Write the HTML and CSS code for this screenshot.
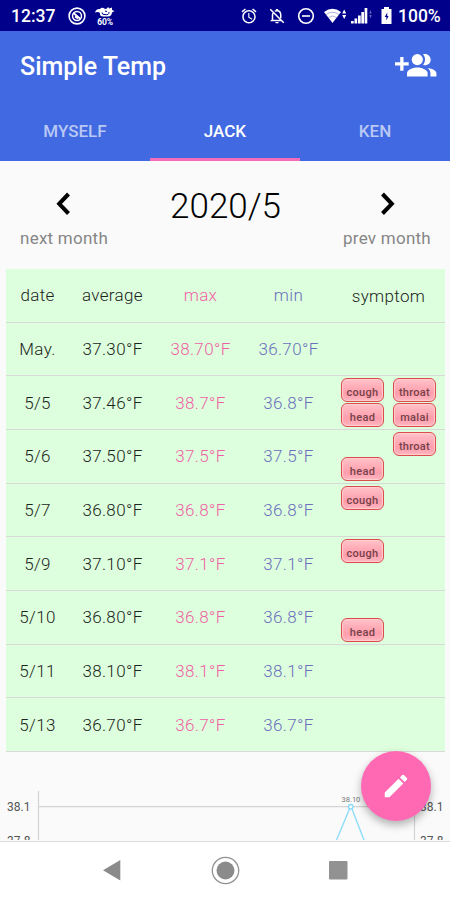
FILE: index.html
```html
<!DOCTYPE html>
<html lang="en">
<head>
<meta charset="utf-8">
<title>Simple Temp</title>
<link rel="stylesheet" href="styles.css">
</head>
<body>
<div class="screen">
  <header class="status">
    <span class="clock">12:37</span>
    <svg class="s-nosound" width="18" height="18" viewBox="0 0 18 18" fill="none" stroke="#fff"><circle cx="9" cy="9" r="7.9" stroke-width="1.6"/><circle cx="9" cy="9" r="4.5" stroke-width="1.5"/><path d="M5.500 6l7 6M7 9.500l3 2" stroke-width="1.700"/></svg>
    <div class="weather">
      <svg width="20" height="11" viewBox="0 0 20 11"><path d="M0 5.500Q1 1.500 5 2Q7-.5 10 2L12 1.500L13 0L14.500 1.500L17 .5V3L19.500 4L17 5.500Q16.500 9.500 13 9.500H8Q4.500 9.500 5 6Q3 4.500 0 5.500Z" fill="#fff"/><path d="M7 5.500Q7 8 10 7.500Q14 8.500 14 5M10 4L12 4.500" fill="none" stroke="#00008b"/></svg>
      <span>60%</span>
    </div>
    <div class="grow"></div>
    <svg class="s-alarm" width="18" height="18" viewBox="0 0 24 24" fill="#fff"><path d="M22 5.720l-4.600-3.860-1.290 1.530 4.600 3.860L22 5.720zM7.880 3.390L6.600 1.860 2 5.710l1.290 1.530 4.590-3.850zM12.500 8H11v6l4.750 2.850.75-1.230-4-2.370V8zM12 4c-4.970 0-9 4.030-9 9s4.020 9 9 9a9 9 0 0 0 0-18zm0 16c-3.870 0-7-3.130-7-7s3.130-7 7-7 7 3.130 7 7-3.130 7-7 7z"/></svg>
    <svg class="s-bell" width="18" height="18" viewBox="0 0 24 24" fill="none" stroke="#fff" stroke-width="2"><path d="M7 7.500Q6 9 6 11v6l-1 1h13M9 5.500Q10 5 12 5Q17 5 17 11v4M3 3l18 18"/><path d="M10.500 2.500h3v2h-3zM10 20h4v1.500h-4z" fill="#fff" stroke="none"/></svg>
    <svg class="s-dnd" width="18" height="18" viewBox="0 0 18 18" fill="none" stroke="#fff" stroke-width="1.6"><circle cx="9" cy="9" r="7.300"/><path d="M5 9h8"/></svg>
    <svg class="s-wifi" width="23" height="16" viewBox="0 0 23 16" fill="#fff"><path d="M0 4Q8.500-2.500 17 4L8.500 15Z"/><path d="M2 6.500Q8.500 2 15 6.500M4.500 9.500Q8.500 6.500 12.500 9.500" fill="none" stroke="#00008b" stroke-width=".6" opacity=".5"/><path d="M18.200 5.500l2-4 2 4zM18.200 7l2 4 2-4z"/></svg>
    <svg class="s-signal" width="22" height="16" viewBox="0 0 22 16" fill="#fff"><path d="M0 13h2.700v2.500H0zM3.500 10.500h2.700v5H3.500zM7 7.500h2.700v8H7zM10.300 4H13v11.500h-2.700zM13.600 0h2.700v15.500h-2.700z"/><path d="M18.300 5.500l1.200-3.500 1.200 3.500zM18.300 7l1.200 3.500L20.700 7z" opacity=".4"/></svg>
    <svg class="s-battery" width="11" height="17" viewBox="0 0 11 17"><path d="M3 0h5v2h2.500v15H.5V2H3z" fill="#fff"/><path d="M6.300 5.500L3.700 10h1.700v3.500L7.500 9H6.200z" fill="#00008b"/></svg>
    <span class="percent">100%</span>
  </header>

  <div class="appbar">
    <h1>Simple Temp</h1>
    <svg width="42" height="26" viewBox="0 0 42 26" fill="#fff"><path d="M0 9.300h5.200V4.100h3.300v5.200h5.200v3.300H8.500v5.200H5.200v-5.200H0z"/><circle cx="22.300" cy="6.600" r="5.600"/><path d="M12 23.500v-3.400c0-3.700 6.800-5.600 10.300-5.600s10.300 1.900 10.300 5.600v3.400z"/><path d="M28 1.300c4.100-1.200 7.700 1.600 7.700 5.400s-3.700 6.500-7.700 5.200c2.700-3.100 2.700-7.600 0-10.600zM32.500 14.900c4.300.6 8.900 2.200 8.900 5.200v3.400h-6v-3.400c0-2.200-1.100-3.900-2.900-5.200z"/></svg>
  </div>
  <nav class="tabs"><span>MYSELF</span><span class="active">JACK</span><span>KEN</span></nav>

  <main class="content">
    <section class="months">
      <div class="side"><svg width="16" height="24" viewBox="0 0 16 24"><path d="M12.500 2L3.200 11.800L12.500 21.500"/></svg><span>next month</span></div>
      <div class="month">2020/5</div>
      <div class="side"><svg width="16" height="24" viewBox="0 0 16 24"><path d="M3.500 2L12.800 11.800L3.500 21.500"/></svg><span>prev month</span></div>
    </section>

    <section class="table">
      <div class="row"><span>date</span><span>average</span><span class="max">max</span><span class="min">min</span><span class="sym">symptom</span></div>
      <div class="row"><span>May.</span><span>37.30°F</span><span class="max">38.70°F</span><span class="min">36.70°F</span></div>
      <div class="row"><span>5/5</span><span>37.46°F</span><span class="max">38.7°F</span><span class="min">36.8°F</span><div class="tags"><b>cough</b><b>throat</b><b>head</b><b>malai</b></div></div>
      <div class="row"><span>5/6</span><span>37.50°F</span><span class="max">37.5°F</span><span class="min">37.5°F</span><div class="tags"><b class="right">throat</b><b>head</b></div></div>
      <div class="row"><span>5/7</span><span>36.80°F</span><span class="max">36.8°F</span><span class="min">36.8°F</span><div class="tags"><b>cough</b></div></div>
      <div class="row"><span>5/9</span><span>37.10°F</span><span class="max">37.1°F</span><span class="min">37.1°F</span><div class="tags"><b>cough</b></div></div>
      <div class="row"><span>5/10</span><span>36.80°F</span><span class="max">36.8°F</span><span class="min">36.8°F</span><div class="tags"><b class="low">head</b></div></div>
      <div class="row"><span>5/11</span><span>38.10°F</span><span class="max">38.1°F</span><span class="min">38.1°F</span></div>
      <div class="row"><span>5/13</span><span>36.70°F</span><span class="max">36.7°F</span><span class="min">36.7°F</span></div>
    </section>

    <svg class="chart" width="450" height="49" viewBox="0 0 450 49">
      <path d="M38.500 0v49M414.500 0v49M38 15.700h376" stroke="#d4d4d4" stroke-width="1.200" fill="none"/>
      <path d="M336.500 49L349.500 18M352 18L364 49" stroke="#8fdcf8" stroke-width="1.400" fill="none"/>
      <circle cx="350.800" cy="15.700" r="2.300" stroke="#8fdcf8" stroke-width="1.500" fill="#fafafa"/>
      <g class="axis"><text x="7" y="19.700">38.1</text><text x="7" y="53.500">37.8</text><text x="420" y="19.700">38.1</text><text x="420" y="53.500">37.8</text></g>
      <text class="point" x="341.500" y="10.800">38.10</text>
    </svg>
    <button class="fab" aria-label="Edit"><svg width="30" height="30" viewBox="0 0 24 24" fill="#fff"><path d="M3 17.250V21h3.750L17.810 9.940l-3.750-3.750L3 17.250zM20.710 7.040a1 1 0 0 0 0-1.410l-2.340-2.340a1 1 0 0 0-1.410 0l-1.830 1.830 3.750 3.750 1.830-1.830z"/></svg></button>
  </main>

  <footer class="navbar">
    <svg width="18" height="21" viewBox="0 0 18 21"><path d="M0 10.300L17.300 0v20.500z" fill="#8b8b8b"/></svg>
    <svg width="29" height="29" viewBox="0 0 29 29"><circle cx="14.500" cy="14.500" r="13.200" fill="none" stroke="#929292" stroke-width="1.300"/><circle cx="14.500" cy="14.500" r="9" fill="#8b8b8b"/></svg>
    <svg width="19" height="19" viewBox="0 0 19 19"><rect width="18.500" height="18.500" rx="1" fill="#929292"/></svg>
  </footer>
</div>
</body>
</html>
```
FILE: styles.css
```css
* { box-sizing: border-box; }
body { margin: 0; font-family: Roboto, "Liberation Sans", sans-serif; background: #fafafa; }
svg { display: block; flex: none; }
.screen { width: 450px; height: 900px; display: flex; flex-direction: column; overflow: hidden; }

.status { height: 31px; flex: none; display: flex; align-items: center; background: #00008b; color: #fff; padding: 0 8px 0 11px; font-weight: 500; }
.clock { width: 57px; font-size: 17.500px; line-height: 31px; padding-top: 1px; }
.weather { margin-left: 9px; width: 20px; display: flex; flex-direction: column; align-items: center; padding-top: 1px; }
.weather span { font-size: 8.500px; line-height: 8px; font-weight: 700; letter-spacing: -.2px; }
.grow { flex: 1; }
.s-alarm { margin-right: 10px; }
.s-bell { margin-right: 11px; }
.s-dnd { margin-right: 9px; }
.s-wifi { margin-right: 4px; }
.s-signal { margin-right: 8px; }
.s-battery { margin-right: 6px; }
.percent { font-size: 17.500px; width: 44px; padding-top: 1px; white-space: nowrap; }

.appbar { height: 71px; flex: none; display: flex; justify-content: space-between; align-items: center; background: #4169e1; padding: 0 13px 2px 20px; }
h1 { margin: 0; padding-top: 2px; color: #fff; font-size: 25px; font-weight: 500; }
.tabs { height: 58.500px; flex: none; display: flex; background: #4169e1; }
.tabs span { flex: 1; height: 58.500px; line-height: 58px; text-align: center; color: #b9c8f5; font-size: 17px; font-weight: 500; border-bottom: 3px solid transparent; }
.tabs .active { color: #fff; border-bottom-color: #f56cba; }

.content { position: relative; height: 681px; flex: none; overflow: hidden; border-bottom: 1px solid #dcdcdc; }
.months { height: 108.500px; display: flex; justify-content: space-between; padding: 31px 19px 0 20px; }
.side { display: flex; flex-direction: column; align-items: center; color: #868686; font-size: 17px; letter-spacing: .25px; line-height: 22px; gap: 11px; }
.side path { fill: none; stroke: #000; stroke-width: 4px; }
.month { font-size: 35px; line-height: 29px; color: #000; font-weight: 350; }

.table { width: 439px; margin-left: 6px; background: #dfd; }
.row { height: 53.670px; display: grid; grid-template-columns: 63px 87px 89px 87px 113px; align-items: center; text-align: center; font-size: 17px; letter-spacing: .35px; font-weight: 350; color: #1c241c; border-bottom: 1.500px solid #d8d8d8; }
.max { color: #ef5fa4; }
.min { color: #6b6fbd; }
.sym { padding-top: 2px; }
.tags { align-self: start; height: 52px; padding: 2px 9px 0 9px; display: grid; grid-template: 24px 24px / 43px 43px; column-gap: 9px; row-gap: 1px; }
.tags b { height: 24px; border: 1.500px solid #dc4c4c; border-radius: 6px; background: linear-gradient(#ffc2c8, #ff9dac 65%, #ffb5bf); box-shadow: inset 0 0 1px 1px #ffd0d2; color: #75434b; font-size: 11px; line-height: 23px; padding-top: 2px; font-weight: 500; letter-spacing: .3px; }
.right { grid-column: 2; }
.low { grid-row: 2; }

.chart { margin-top: 39.500px; }
.axis text { font-size: 12px; fill: #555; }
.point { font-size: 7.500px; fill: #777; }
.fab { position: absolute; right: 19.500px; bottom: 20px; width: 70px; height: 70px; padding: 0; border: 0; border-radius: 50%; background: #ff69b4; display: grid; place-items: center; box-shadow: 0 4px 8px rgba(0, 0, 0, .3); }

.navbar { flex: 1; background: #fff; display: flex; justify-content: space-between; align-items: center; padding: 0 102px 0 103px; }
```
